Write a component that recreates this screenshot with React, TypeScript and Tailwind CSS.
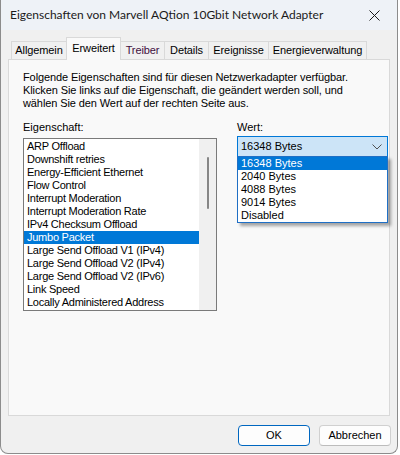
import React from 'react';

const tabs = [
  { label: 'Allgemein', w: 'w-[55px]' },
  { label: 'Erweitert', w: 'w-[55px]', active: true },
  { label: 'Treiber', w: 'w-[43px]', purple: true },
  { label: 'Details', w: 'w-[44px]' },
  { label: 'Ereignisse', w: 'w-[60px]' },
  { label: 'Energieverwaltung', w: 'w-[99px]' },
];

const properties = [
  'ARP Offload',
  'Downshift retries',
  'Energy-Efficient Ethernet',
  'Flow Control',
  'Interrupt Moderation',
  'Interrupt Moderation Rate',
  'IPv4 Checksum Offload',
  'Jumbo Packet',
  'Large Send Offload V1 (IPv4)',
  'Large Send Offload V2 (IPv4)',
  'Large Send Offload V2 (IPv6)',
  'Link Speed',
  'Locally Administered Address',
];

const values = ['16348 Bytes', '2040 Bytes', '4088 Bytes', '9014 Bytes', 'Disabled'];

const sysFont = { fontFamily: '"Liberation Sans", Arial, sans-serif' };

export default function App() {
  return (
    <div className="w-[400px] h-[455px] bg-white" style={sysFont}>
      <div className="w-[398px] h-[454px] flex flex-col bg-[#f0f0f0] border-x border-b border-[#8c8c8c] rounded-b-[8px] overflow-hidden text-[11px] text-black">
        {/* title bar */}
        <div className="h-[30px] shrink-0 flex items-center bg-[#eef2f7]">
          <span
            className="pl-[9px] text-[12px] text-[#1a1a1a]"
            style={{ fontFamily: 'Lato, "Noto Sans", sans-serif' }}
          >
            Eigenschaften von Marvell AQtion 10Gbit Network Adapter
          </span>
          <div className="ml-auto w-[46px] h-[30px] flex items-center justify-center">
            <svg width="11" height="11" viewBox="0 0 11 11">
              <path d="M0.5 0.5 L10.5 10.5 M10.5 0.5 L0.5 10.5" stroke="#1a1a1a" strokeWidth="1" />
            </svg>
          </div>
        </div>

        {/* tabs */}
        <div className="mt-[7px] px-[7px] flex flex-col">
          <div className="flex items-end h-[22px] pl-[3px] relative z-10 tracking-[-0.1px]">
            {tabs.map((t, i) =>
              t.active ? (
                <div
                  key={t.label}
                  className={`${t.w} h-[23px] -mb-px bg-[#f9f9f9] border-x border-t border-[#d9d9d9] flex items-center justify-center pb-[2px]`}
                >
                  {t.label}
                </div>
              ) : (
                <div
                  key={t.label}
                  className={`${t.w} h-[18px] bg-[#f0f0f0] border-t border-[#d9d9d9] ${
                    i === tabs.length - 1 ? 'border-r' : ''
                  } ${i === 0 ? 'border-l' : ''} ${tabs[i - 1]?.active ? '' : 'border-l'} flex items-center justify-center ${
                    t.purple ? 'text-[#3f0f3f]' : ''
                  }`}
                >
                  {t.label}
                </div>
              )
            )}
          </div>

          {/* panel */}
          <div className="h-[357px] bg-[#f9f9f9] border border-[#d9d9d9] pl-[14px] pt-[11px] leading-[13px]">
            <div className="tracking-[-0.1px]">
              <p>Folgende Eigenschaften sind für diesen Netzwerkadapter verfügbar.</p>
              <p>Klicken Sie links auf die Eigenschaft, die geändert werden soll, und</p>
              <p>wählen Sie den Wert auf der rechten Seite aus.</p>
            </div>

            <div className="flex gap-[20px] mt-[11px]">
              {/* property list */}
              <div className="w-[194px] flex flex-col">
                <div className="h-[13px] mb-[4px]">Eigenschaft:</div>
                <div className="h-[173px] border border-[#7a7a7a] bg-white flex">
                  <div className="flex-1 flex flex-col pt-px tracking-[-0.25px]">
                    {properties.map((p) => (
                      <div
                        key={p}
                        className={`h-[13px] pl-[3px] whitespace-nowrap ${
                          p === 'Jumbo Packet' ? 'bg-[#0078d7] text-white' : ''
                        }`}
                      >
                        {p}
                      </div>
                    ))}
                  </div>
                  <div className="w-[17px] bg-[#f0f0f0] flex justify-center pt-[18px]">
                    <div className="w-[2px] h-[52px] bg-[#868686] rounded-full" />
                  </div>
                </div>
              </div>

              {/* value combo */}
              <div className="w-[151px] flex flex-col">
                <div className="h-[13px] mb-[2px]">Wert:</div>
                <div className="relative">
                  <div className="h-[21px] border border-[#0078d7] bg-[#cce4f7] flex items-center pl-[3px] pr-[5px]">
                    <span>16348 Bytes</span>
                    <svg className="ml-auto" width="10" height="6" viewBox="0 0 10 6">
                      <path d="M0.5 0.5 L5 5 L9.5 0.5" stroke="#505050" fill="none" strokeWidth="1" />
                    </svg>
                  </div>
                  <div className="absolute left-0 top-[20px] w-[151px] border border-[#1f6fc5] bg-white shadow-[3px_3px_3px_rgba(0,0,0,0.35)] flex flex-col">
                    {values.map((v, i) => (
                      <div
                        key={v}
                        className={`h-[13px] pl-[3px] ${i === 0 ? 'bg-[#0078d7] text-white' : ''}`}
                      >
                        {v}
                      </div>
                    ))}
                  </div>
                </div>
              </div>
            </div>
          </div>
        </div>

        {/* buttons */}
        <div className="mt-[9px] flex justify-end gap-[9px] pr-[6px]">
          <button className="w-[72px] h-[21px] rounded-[4px] border border-[#0067c0] bg-[#fdfdfd] text-[11px]">
            OK
          </button>
          <button className="w-[72px] h-[21px] rounded-[4px] border border-[#d0d0d0] border-b-[#bcbcbc] bg-[#fdfdfd] text-[11px]">
            Abbrechen
          </button>
        </div>
      </div>
    </div>
  );
}
